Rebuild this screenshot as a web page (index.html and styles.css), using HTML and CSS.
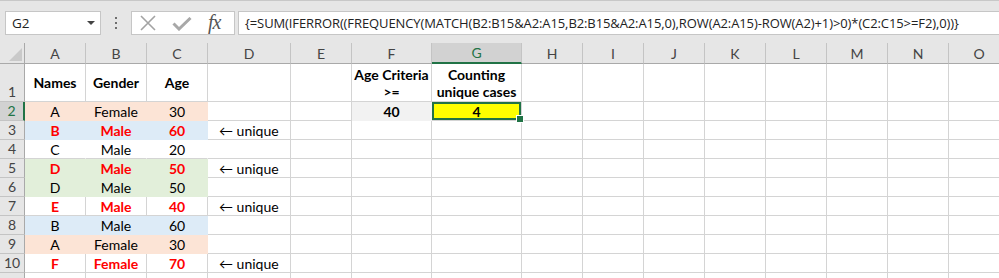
FILE: index.html
```html
<!DOCTYPE html>
<html lang="en">
<head>
  <meta charset="UTF-8">
  <title>Unique cases</title>
  <link rel="stylesheet" href="styles.css">
</head>
<body>

  <div class="toolbar">
    <div class="name-box">
      <span>G2</span>
      <span class="drop"></span>
    </div>
    <div class="grip"><i></i><i></i><i></i></div>
    <div class="buttons">
      <svg class="icon-x" width="18" height="16" viewBox="0 0 18 16">
        <path d="M2 1 L16 15 M16 1 L2 15" stroke="#a3a3a3" stroke-width="1.6" fill="none"/>
      </svg>
      <svg class="icon-ok" width="20" height="14" viewBox="0 0 20 14">
        <path d="M1.5 6.5 L7 12 L18.5 1" stroke="#a8a8a8" stroke-width="3" fill="none"/>
      </svg>
      <span class="fx">fx</span>
    </div>
    <div class="formula">{=SUM(IFERROR((FREQUENCY(MATCH(B2:B15&amp;A2:A15,B2:B15&amp;A2:A15,0),ROW(A2:A15)-ROW(A2)+1)&gt;0)*(C2:C15&gt;=F2),0))}</div>
  </div>

  <table class="sheet">
    <colgroup>
      <col class="c-head">
      <col class="c-std"><col class="c-std"><col class="c-std">
      <col class="c-d">
      <col class="c-std">
      <col class="c-f">
      <col class="c-g">
      <col class="c-std"><col class="c-std"><col class="c-std"><col class="c-std">
      <col class="c-std"><col class="c-std"><col class="c-std"><col class="c-std">
    </colgroup>

    <tr class="r-cols">
      <th class="corner">
        <svg width="13" height="13" viewBox="0 0 13 13"><path d="M13 0 L13 13 L0 13 Z" fill="#c9c9c9"/></svg>
      </th>
      <th>A</th><th>B</th><th>C</th><th>D</th><th>E</th><th>F</th>
      <th class="sel-col">G</th>
      <th>H</th><th>I</th><th>J</th><th>K</th><th>L</th><th>M</th><th>N</th><th>O</th>
    </tr>

    <tr class="r-tall">
      <th class="rh">1</th>
      <td class="c b mid">Names</td>
      <td class="c b mid">Gender</td>
      <td class="c b mid">Age</td>
      <td></td><td></td>
      <td class="c b mid">Age Criteria<br>&gt;=</td>
      <td class="c b mid">Counting<br>unique cases</td>
      <td></td><td></td><td></td><td></td><td></td><td></td><td></td><td></td>
    </tr>

    <tr>
      <th class="rh sel-row">2</th>
      <td class="c peach">A</td><td class="c peach">Female</td><td class="c peach">30</td>
      <td></td><td></td>
      <td class="c b gray">40</td>
      <td class="c b yellow active">4</td>
      <td></td><td></td><td></td><td></td><td></td><td></td><td></td><td></td>
    </tr>

    <tr>
      <th class="rh">3</th>
      <td class="c blue hot">B</td><td class="c blue hot">Male</td><td class="c blue hot">60</td>
      <td class="note">&larr; unique</td><td></td>
      <td></td><td></td>
      <td></td><td></td><td></td><td></td><td></td><td></td><td></td><td></td>
    </tr>

    <tr>
      <th class="rh">4</th>
      <td class="c white">C</td><td class="c white">Male</td><td class="c white">20</td>
      <td></td><td></td>
      <td></td><td></td>
      <td></td><td></td><td></td><td></td><td></td><td></td><td></td><td></td>
    </tr>

    <tr>
      <th class="rh">5</th>
      <td class="c green hot">D</td><td class="c green hot">Male</td><td class="c green hot">50</td>
      <td class="note">&larr; unique</td><td></td>
      <td></td><td></td>
      <td></td><td></td><td></td><td></td><td></td><td></td><td></td><td></td>
    </tr>

    <tr>
      <th class="rh">6</th>
      <td class="c green">D</td><td class="c green">Male</td><td class="c green">50</td>
      <td></td><td></td>
      <td></td><td></td>
      <td></td><td></td><td></td><td></td><td></td><td></td><td></td><td></td>
    </tr>

    <tr>
      <th class="rh">7</th>
      <td class="c hot">E</td><td class="c hot">Male</td><td class="c hot">40</td>
      <td class="note">&larr; unique</td><td></td>
      <td></td><td></td>
      <td></td><td></td><td></td><td></td><td></td><td></td><td></td><td></td>
    </tr>

    <tr>
      <th class="rh">8</th>
      <td class="c blue">B</td><td class="c blue">Male</td><td class="c blue">60</td>
      <td></td><td></td>
      <td></td><td></td>
      <td></td><td></td><td></td><td></td><td></td><td></td><td></td><td></td>
    </tr>

    <tr>
      <th class="rh">9</th>
      <td class="c peach">A</td><td class="c peach">Female</td><td class="c peach">30</td>
      <td></td><td></td>
      <td></td><td></td>
      <td></td><td></td><td></td><td></td><td></td><td></td><td></td><td></td>
    </tr>

    <tr>
      <th class="rh">10</th>
      <td class="c hot">F</td><td class="c hot">Female</td><td class="c hot">70</td>
      <td class="note">&larr; unique</td><td></td>
      <td></td><td></td>
      <td></td><td></td><td></td><td></td><td></td><td></td><td></td><td></td>
    </tr>

    <tr>
      <th class="rh"></th>
      <td></td><td></td><td></td>
      <td></td><td></td>
      <td></td><td></td>
      <td></td><td></td><td></td><td></td><td></td><td></td><td></td><td></td>
    </tr>
  </table>

</body>
</html>
```

FILE: styles.css
```css
* {
  box-sizing: border-box;
}

body {
  margin: 0;
  width: 999px;
  height: 278px;
  overflow: hidden;
  background: #fff;
  font-family: Lato, "Liberation Sans", sans-serif;
  color: #000;
}

/* formula bar */
.toolbar {
  height: 43px;
  background: #e6e6e6;
  border-top: 1px solid #c8c8c8;
  display: flex;
  align-items: flex-start;
  padding: 10px 0 0 5px;
  font-family: "Open Sans", "Noto Sans", sans-serif;
}

.name-box {
  width: 96px;
  height: 24px;
  background: #fff;
  border: 1px solid #c6c6c6;
  display: flex;
  align-items: center;
  justify-content: space-between;
  padding: 0 5px 0 6px;
  font-size: 13.5px;
  color: #222;
}

.drop {
  width: 0;
  height: 0;
  border-left: 4px solid transparent;
  border-right: 4px solid transparent;
  border-top: 4px solid #444;
}

.grip {
  width: 30px;
  height: 24px;
  display: flex;
  flex-direction: column;
  align-items: center;
  justify-content: center;
  gap: 3px;
}

.grip i {
  width: 2px;
  height: 2px;
  background: #6e6e6e;
}

.buttons {
  width: 104px;
  height: 24px;
  background: #fff;
  border: 1px solid #c6c6c6;
  display: flex;
  align-items: center;
  padding-left: 7px;
}

.icon-x {
  margin-right: 15px;
}

.icon-ok {
  margin-right: 16px;
  margin-top: 2px;
}

.fx {
  font-family: "Liberation Serif", serif;
  font-style: italic;
  font-size: 20px;
  color: #555;
  letter-spacing: -1px;
  line-height: 1;
  margin-top: -2px;
}

.formula {
  flex: 1;
  height: 24px;
  margin-left: 3px;
  margin-right: -10px;
  background: #fff;
  border: 1px solid #c6c6c6;
  padding: 0 0 0 6px;
  font-size: 13px;
  letter-spacing: -0.1px;
  line-height: 22px;
  color: #222;
  white-space: nowrap;
  overflow: hidden;
}

/* grid */
.sheet {
  table-layout: fixed;
  border-collapse: separate;
  border-spacing: 0;
  width: 1010px;
  font-size: 14px;
}

.c-head { width: 25px; }
.c-std { width: 61px; }
.c-d { width: 83px; }
.c-f { width: 80px; }
.c-g { width: 90px; }

.sheet td,
.sheet th {
  padding: 0;
  height: 19px;
  border-right: 1px solid #d4d4d4;
  border-bottom: 1px solid #d4d4d4;
  line-height: 17px;
  white-space: nowrap;
  overflow: hidden;
}

.sheet tr.r-cols th {
  height: 21px;
  background: #e6e6e6;
  border-right-color: #c4c4c4;
  border-bottom-color: #a9a9a9;
  font-weight: normal;
  color: #444;
  text-align: center;
}

.sheet tr.r-cols th.corner {
  text-align: right;
  vertical-align: bottom;
  padding: 0 2px 2px 0;
  border-right-color: #a9a9a9;
}

.corner svg {
  display: block;
  margin-left: auto;
}

.sheet tr.r-cols th.sel-col {
  background: #d2d2d2;
  border-bottom: 2px solid #217346;
  color: #217346;
}

.r-tall td,
.r-tall th {
  height: 38px;
}

.sheet th.rh {
  background: #e6e6e6;
  border-right-color: #a9a9a9;
  border-bottom-color: #c4c4c4;
  font-weight: normal;
  color: #444;
  text-align: center;
  vertical-align: bottom;
  padding-bottom: 1px;
}

.sheet th.sel-row {
  background: #d2d2d2;
  border-right: 2px solid #217346;
  color: #217346;
}

.c {
  text-align: center;
}

.b {
  font-weight: bold;
}

.mid {
  vertical-align: middle;
  line-height: 19px;
}

.hot {
  color: #f00;
  font-weight: bold;
}

.note {
  padding-left: 11px !important;
}

.sheet td.peach {
  background: #fce4d6;
  border-color: #fce4d6;
}

.sheet td.blue {
  background: #ddebf7;
  border-color: #ddebf7;
}

.sheet td.green {
  background: #e2efda;
  border-color: #e2efda;
}

.sheet td.white {
  border-right-color: #fff;
}

.sheet td.gray {
  background: #f2f2f2;
  border-color: #f2f2f2;
}

.sheet td.yellow {
  background: #ff0;
}

.sheet td.active {
  position: relative;
  overflow: visible;
  box-shadow: inset 0 0 0 2px #217346;
}

.active::after {
  content: "";
  position: absolute;
  right: -3px;
  bottom: -3px;
  width: 6px;
  height: 6px;
  background: #217346;
  border: 1px solid #fff;
}
```
